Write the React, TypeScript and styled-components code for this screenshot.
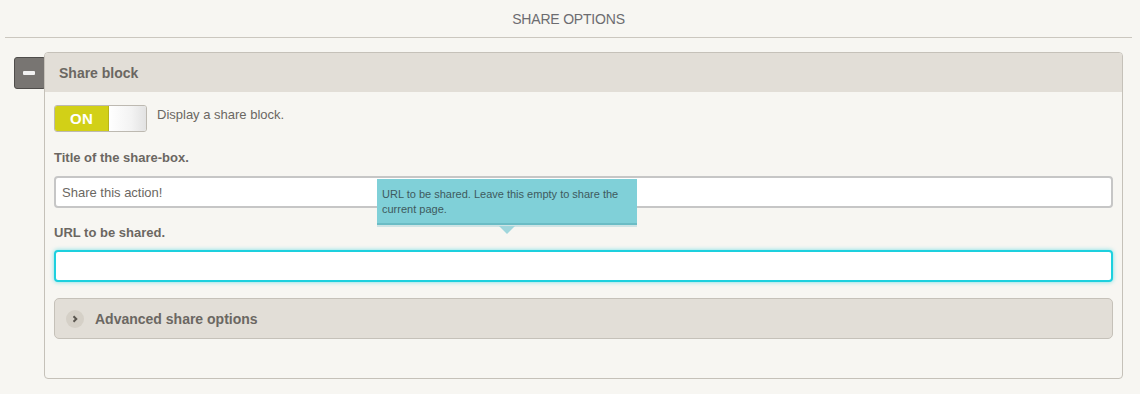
import React from 'react'
import styled, { createGlobalStyle } from 'styled-components'

const GlobalStyle = createGlobalStyle`
  body {
    margin: 0;
    background: #f7f6f2;
    font-family: "Liberation Sans", Arial, sans-serif;
    color: #6b6762;
  }
`

const Page = styled.div`
  width: 1140px;
  height: 394px;
  overflow: hidden;
`

const PageTitle = styled.div`
  margin: 0 8px 0 5px;
  height: 37px;
  border-bottom: 1px solid #cbc7bf;
  display: flex;
  align-items: center;
  justify-content: center;
  font-size: 14px;
  color: #6c6c70;
  letter-spacing: -0.2px;
`

const Section = styled.div`
  display: flex;
  align-items: flex-start;
  padding: 14px 0 0 14px;
`

const CollapseButton = styled.button`
  margin-top: 5px;
  width: 32px;
  height: 32px;
  padding: 0;
  border: 1px solid #4f4d4b;
  border-radius: 3px;
  background: #787572;
  display: flex;
  align-items: center;
  padding-left: 8px;

  &::before {
    content: '';
    display: block;
    width: 12px;
    height: 4px;
    border-radius: 1px;
    background: #f2f2f2;
  }
`

const Panel = styled.div`
  position: relative;
  z-index: 1;
  margin-left: -2px;
  width: 1079px;
  box-sizing: border-box;
  border: 1px solid #c5c1b9;
  border-radius: 4px;
  background: #f7f6f2;
  overflow: hidden;
`

const PanelHeader = styled.div`
  height: 39px;
  background: #e2ded7;
  display: flex;
  align-items: center;
  padding-left: 14px;
  font-weight: bold;
  font-size: 14px;
  color: #6b6762;
`

const PanelBody = styled.div`
  padding: 13px 9px 39px 9px;
  display: flex;
  flex-direction: column;
`

const ToggleRow = styled.div`
  display: flex;
  align-items: flex-start;
  gap: 10px;
  font-size: 13px;
  color: #6b6762;
`

const ToggleText = styled.span`
  margin-top: 2px;
  line-height: 16px;
`

const Toggle = styled.div`
  width: 93px;
  height: 27px;
  box-sizing: border-box;
  border: 1px solid #bdb9b1;
  border-radius: 3px;
  display: flex;
  overflow: hidden;
`

const ToggleOn = styled.div`
  width: 53px;
  background: #d2d017;
  color: #fff;
  font-weight: bold;
  font-size: 15px;
  display: flex;
  align-items: center;
  justify-content: center;
  letter-spacing: 0.3px;
`

const ToggleKnob = styled.div`
  flex: 1;
  background: linear-gradient(90deg, #ffffff 0%, #f3f3f3 60%, #e2e2e2 100%);
  border-left: 1px solid #b8b41a;
`

const FieldLabel = styled.label<{ $top: number }>`
  display: block;
  margin-top: ${(p) => p.$top}px;
  font-size: 13px;
  line-height: 16px;
  font-weight: bold;
  color: #6b6762;
`

const Field = styled.div`
  position: relative;
`

const TextInput = styled.input<{ $top: number; $focused?: boolean }>`
  display: block;
  margin-top: ${(p) => p.$top}px;
  width: 100%;
  height: 32px;
  box-sizing: border-box;
  border: 2px solid ${(p) => (p.$focused ? '#1dd0de' : '#c6c6c6')};
  border-radius: 4px;
  background: #fff;
  padding: 0 6px;
  font-family: "Liberation Sans", Arial, sans-serif;
  font-size: 13px;
  color: #6b6762;
  outline: none;
  box-shadow: ${(p) => (p.$focused ? '0 0 4px rgba(29, 208, 222, 0.6)' : 'none')};
`

const Tooltip = styled.div`
  position: absolute;
  z-index: 2;
  left: 323px;
  top: -29px;
  width: 260px;
  box-sizing: border-box;
  padding: 8px 5px 6px 5px;
  background: #80d0d8;
  border-bottom: 2px solid #6bbcc5;
  box-shadow: 0 2px 0 #cfe4e5;
  font-size: 11px;
  line-height: 15px;
  color: #3e5a5e;

  &::after {
    content: '';
    position: absolute;
    left: 122px;
    bottom: -11px;
    border-left: 8px solid transparent;
    border-right: 8px solid transparent;
    border-top: 8px solid #9fd6dc;
  }
`

const Advanced = styled.div`
  margin-top: 16px;
  height: 41px;
  box-sizing: border-box;
  border: 1px solid #c5c1b9;
  border-radius: 5px;
  background: #e2ded7;
  display: flex;
  align-items: center;
  padding-left: 11px;
  gap: 11px;
  font-weight: bold;
  font-size: 14px;
  color: #6b6762;
`

const ChevronBadge = styled.span`
  width: 18px;
  height: 18px;
  border-radius: 50%;
  background: #d5d0c7;
  display: flex;
  align-items: center;
  justify-content: center;
`

const App: React.FC = () => {
  return (
    <Page>
      <GlobalStyle />
      <PageTitle>SHARE OPTIONS</PageTitle>
      <Section>
        <CollapseButton aria-label="collapse" />
        <Panel>
          <PanelHeader>Share block</PanelHeader>
          <PanelBody>
            <ToggleRow>
              <Toggle>
                <ToggleOn>ON</ToggleOn>
                <ToggleKnob />
              </Toggle>
              <ToggleText>Display a share block.</ToggleText>
            </ToggleRow>

            <FieldLabel $top={18}>Title of the share-box.</FieldLabel>
            <TextInput $top={10} defaultValue="Share this action!" />

            <Field>
              <Tooltip>URL to be shared. Leave this empty to share the current page.</Tooltip>
              <FieldLabel $top={17}>URL to be shared.</FieldLabel>
              <TextInput $top={9} $focused defaultValue="" />
            </Field>

            <Advanced>
              <ChevronBadge>
                <svg width="8" height="8" viewBox="0 0 8 8">
                  <path d="M2.5 1.2 L5.3 4 L2.5 6.8" fill="none" stroke="#5b5750" strokeWidth="2" />
                </svg>
              </ChevronBadge>
              Advanced share options
            </Advanced>
          </PanelBody>
        </Panel>
      </Section>
    </Page>
  )
}

export default App
